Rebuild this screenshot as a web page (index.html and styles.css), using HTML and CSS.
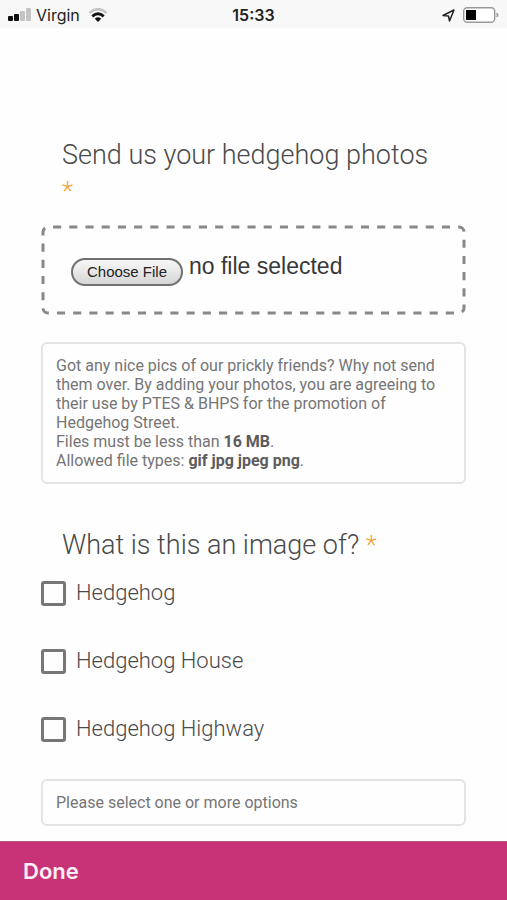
FILE: index.html
```html
<!DOCTYPE html>
<html lang="en">
<head>
<meta charset="utf-8">
<meta name="viewport" content="width=device-width, initial-scale=1">
<title>Hedgehog photos</title>
<link rel="stylesheet" href="styles.css">
</head>
<body>
<header class="status">
  <div class="status-left">
    <svg width="23" height="14" viewBox="0 0 23 14" aria-hidden="true">
      <rect x="0" y="8" width="5" height="5" rx="1" fill="#111"/>
      <rect x="6" y="6" width="5" height="7" rx="1" fill="#111"/>
      <rect x="12" y="3" width="5" height="10" rx="1" fill="#c4c4c4"/>
      <rect x="18" y="0" width="5" height="13" rx="1" fill="#c4c4c4"/>
    </svg>
    <span>Virgin</span>
    <svg class="wifi" width="20" height="14" viewBox="0 0 20 14" aria-hidden="true">
      <path d="M1.5 5Q10-2.6 18.500 5" fill="none" stroke="#c4c4c4" stroke-width="2.600"/>
      <path d="M4.300 8.400Q10 3.200 15.700 8.400" fill="none" stroke="#111" stroke-width="2.800"/>
      <path d="M6.800 10.700Q10 8 13.200 10.700L10 14Z" fill="#111"/>
    </svg>
  </div>
  <time class="clock">15:33</time>
  <div class="status-right">
    <svg width="13" height="13" viewBox="0 0 13 13" aria-hidden="true">
      <path d="M1 6.500L12 1L7.500 12L6.500 7Z" fill="none" stroke="#222" stroke-width="1.500" stroke-linejoin="round"/>
    </svg>
    <svg width="36" height="16" viewBox="0 0 36 16" aria-hidden="true">
      <rect x="0.700" y="0.700" width="31" height="14.600" rx="3.500" fill="#fff" stroke="#999" stroke-width="1.400"/>
      <rect x="3" y="3" width="10" height="10" fill="#000"/>
      <path d="M33.500 5.500Q35.500 6 35.500 8T33.500 10.500Z" fill="#999"/>
    </svg>
  </div>
</header>
<form class="form" id="photo-form">
  <section class="question">
    <h2 class="title"><label for="photos">Send us your hedgehog photos <span class="required">*</span></label></h2>
    <div class="drop">
      <svg class="dashes" aria-hidden="true"><rect x="0" y="0" width="100%" height="100%" rx="5" pathLength="992"/></svg>
      <input class="file" id="photos" type="file">
      <span class="file-name">no file selected</span>
    </div>
    <p class="note">Got any nice pics of our prickly friends? Why not send them over. By adding your photos, you are agreeing to their use by PTES &amp; BHPS for the promotion of Hedgehog Street.<br>Files must be less than <strong>16 MB</strong>.<br>Allowed file types: <strong>gif jpg jpeg png</strong>.</p>
  </section>
  <fieldset class="question">
    <legend class="title">What is this an image of? <span class="required">*</span></legend>
    <div class="options">
      <label class="option"><input type="checkbox">Hedgehog</label>
      <label class="option"><input type="checkbox">Hedgehog House</label>
      <label class="option"><input type="checkbox">Hedgehog Highway</label>
    </div>
    <p class="note">Please select one or more options</p>
  </fieldset>
</form>
<footer class="bar"><button class="done" type="submit" form="photo-form">Done</button></footer>
</body>
</html>
```
FILE: styles.css
```css
* { box-sizing: border-box; }
body {
  margin: 0;
  min-height: 100vh;
  display: flex;
  flex-direction: column;
  background: #fefefe;
  color: #4a4a4a;
  font-family: Roboto, sans-serif;
}
.status {
  display: grid;
  grid-template-columns: 1fr auto 1fr;
  align-items: center;
  height: 28px;
  padding: 2px 8px 0;
  background: #f8f8f8;
  color: #222;
  font: 16px/20px Inter, sans-serif;
}
.status-left, .status-right { display: flex; align-items: center; gap: 5px; }
.wifi { margin-left: 3px; }
.status-right { justify-content: flex-end; gap: 8px; }
.clock { font-weight: 600; }
.form { flex: 1; padding: 109px 41px 15px; }
.question { margin: 0; padding: 0; border: 0; min-width: 0; }
.title {
  margin: 0;
  padding: 0 21px;
  font-size: 27px;
  font-weight: 300;
  line-height: 36px;
}
.required { color: #f3a33c; font-size: 26px; }
.drop {
  position: relative;
  display: flex;
  align-items: center;
  gap: 6px;
  height: 90px;
  margin-top: 16px;
  padding: 4px 30px 0;
}
.dashes {
  position: absolute;
  inset: 2px;
  width: calc(100% - 4px);
  height: calc(100% - 4px);
  overflow: visible;
  pointer-events: none;
}
.dashes rect {
  fill: none;
  stroke: #888;
  stroke-width: 3px;
  stroke-dasharray: 8 8;
  stroke-dashoffset: -5px;
}
.file { width: 112px; height: 28px; font-size: 0; color: transparent; }
.file::file-selector-button {
  width: 112px;
  height: 28px;
  margin: 0;
  padding: 0;
  border: 2px solid #707070;
  border-radius: 14px;
  background: linear-gradient(#f8f8f8, #d6d6d6);
  color: #222;
  font: 15px/24px "Liberation Sans", sans-serif;
}
.file-name { padding-bottom: 12px; font: 23px/26px "Liberation Sans", sans-serif; color: #383838; }
.note {
  margin: 27px 0 0;
  padding: 12px 13px;
  border: 2px solid #e4e4e4;
  border-radius: 6px;
  color: #757575;
  font-size: 16px;
  line-height: 19px;
}
.note strong { color: #5c5c5c; }
fieldset.question { margin-top: 43px; }
.options { display: grid; gap: 40px; margin-top: 16px; }
.option { display: flex; align-items: center; gap: 10px; font-size: 22px; font-weight: 300; line-height: 28px; }
.option input {
  appearance: none;
  width: 25px;
  height: 25px;
  margin: 0;
  border: 3px solid #777;
  border-radius: 3px;
}
.option input:checked { background: #777; }
fieldset .note { margin-top: 36px; }
.bar {
  position: sticky;
  bottom: 0;
  padding: 16px 23px;
  border-top: 1px solid #b75a86;
  background: #c83377;
}
.done {
  display: block;
  padding: 0;
  border: 0;
  background: none;
  color: #fff0f8;
  font: 600 22px/26px Inter, sans-serif;
}
```
